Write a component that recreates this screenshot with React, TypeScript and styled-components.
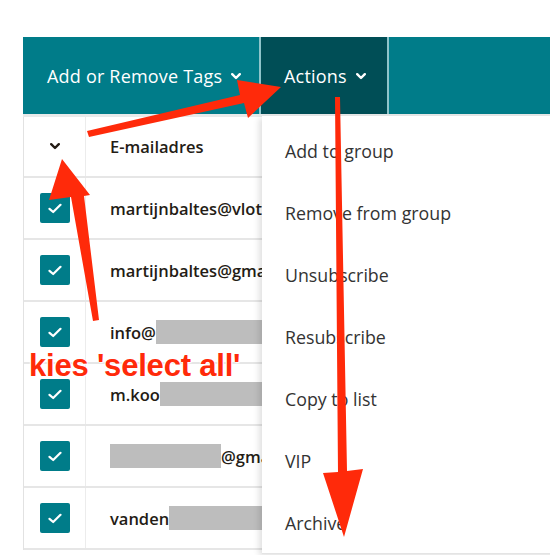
import * as React from 'react'
import styled, { createGlobalStyle } from 'styled-components'

const GlobalStyle = createGlobalStyle`
  html, body {
    margin: 0;
    padding: 0;
    background: #ffffff;
    overflow: hidden;
  }
  body {
    font-family: 'Open Sans', 'Liberation Sans', sans-serif;
  }
`

const Page = styled.div`
  position: relative;
  width: 550px;
  height: 555px;
  overflow: hidden;
  padding: 37px 0 0 23px;
  box-sizing: border-box;
`

const Toolbar = styled.div`
  display: flex;
  height: 77px;
  width: 560px;
  background: #007c89;
  border-bottom: 3px solid #e8eaea;
`

const ToolButton = styled.div<{ $active?: boolean; $width: number }>`
  display: flex;
  align-items: center;
  gap: 9px;
  width: ${p => p.$width}px;
  padding-left: ${p => (p.$active ? 23 : 24)}px;
  box-sizing: border-box;
  background: ${p => (p.$active ? '#004e56' : 'transparent')};
  border-right: 2px solid #8fc4ca;
  color: #ffffff;
  font-size: 18px;
  letter-spacing: 0.2px;
  padding-top: 1px;
`

const Table = styled.div`
  border-left: 1px solid #e2e2e2;
`

const Row = styled.div<{ $header?: boolean }>`
  display: grid;
  grid-template-columns: 62px 1fr;
  height: ${p => (p.$header ? 61 : 62)}px;
  border-bottom: 2px solid #e6e6e6;
  box-sizing: border-box;
`

const CheckCell = styled.div`
  display: flex;
  align-items: center;
  justify-content: center;
  border-right: 1px solid #ececec;
`

const EmailCell = styled.div`
  display: flex;
  align-items: center;
  padding-left: 24px;
  font-size: 16.5px;
  font-weight: 600;
  color: #241c15;
  white-space: nowrap;
`

const Box = styled.div`
  width: 30px;
  height: 30px;
  border-radius: 2px;
  background: #007c89;
  display: flex;
  align-items: center;
  justify-content: center;
`

const Redact = styled.span<{ $w: number }>`
  display: inline-block;
  width: ${p => p.$w}px;
  height: 24px;
  background: #bdbdbd;
`

const Menu = styled.div`
  position: absolute;
  left: 262px;
  top: 116px;
  width: 300px;
  height: 437px;
  background: #ffffff;
  box-shadow: -3px 2px 6px rgba(0, 0, 0, 0.12);
  border-bottom: 1px solid #e4e4e4;
`

const MenuItem = styled.div`
  height: 62px;
  display: flex;
  align-items: center;
  padding-left: 23px;
  font-size: 17.8px;
  color: #333333;
  padding-top: 7px;
  box-sizing: border-box;
`

const Overlay = styled.svg`
  position: absolute;
  left: 0;
  top: 0;
  pointer-events: none;
`

const Note = styled.div`
  position: absolute;
  left: 29px;
  top: 348px;
  font-family: 'Liberation Sans', Arial, sans-serif;
  font-weight: 700;
  font-size: 31px;
  color: #ff2a0a;
  letter-spacing: -0.2px;
  text-shadow: 0 0 2px #fff, 0 0 2px #fff, 1px 1px 1px #fff, -1px -1px 1px #fff;
`

const Chevron = ({ color, size = 10 }: { color: string; size?: number }) => (
  <svg width={size} height={size * 0.7} viewBox="0 0 10 7">
    <path d="M1.2 1.2 L5 5 L8.8 1.2" fill="none" stroke={color} strokeWidth="2.4" strokeLinecap="round" strokeLinejoin="round" />
  </svg>
)

const Check = () => (
  <svg width="14" height="11" viewBox="0 0 14 11">
    <path d="M1.5 5.8 L5.2 9 L12.5 1.8" fill="none" stroke="#fff" strokeWidth="2.2" strokeLinecap="round" strokeLinejoin="round" />
  </svg>
)

const rows: { pre: string; w: number; post?: string }[] = [
  { pre: 'martijnbaltes@vlotweg.nl', w: 0 },
  { pre: 'martijnbaltes@gmail.com', w: 0 },
  { pre: 'info@', w: 140 },
  { pre: 'm.koo', w: 140 },
  { pre: '', w: 111, post: '@gmail.com' },
  { pre: 'vanden', w: 120 },
]

const menuItems = ['Add to group', 'Remove from group', 'Unsubscribe', 'Resubscribe', 'Copy to list', 'VIP', 'Archive']

export default function App() {
  return (
    <Page>
      <GlobalStyle />
      <Toolbar>
        <ToolButton $width={238}>
          Add or Remove Tags <Chevron color="#fff" />
        </ToolButton>
        <ToolButton $width={128} $active>
          Actions <Chevron color="#fff" />
        </ToolButton>
      </Toolbar>
      <Table>
        <Row $header>
          <CheckCell>
            <Chevron color="#241c15" />
          </CheckCell>
          <EmailCell>E-mailadres</EmailCell>
        </Row>
        {rows.map((r, i) => (
          <Row key={i}>
            <CheckCell>
              <Box>
                <Check />
              </Box>
            </CheckCell>
            <EmailCell>
              {r.w > 0 && !r.pre && <Redact $w={r.w} />}
              {r.pre}
              {r.w > 0 && r.pre && <Redact $w={r.w} />}
              {r.post}
            </EmailCell>
          </Row>
        ))}
      </Table>
      <Menu>
        {menuItems.map(m => (
          <MenuItem key={m}>{m}</MenuItem>
        ))}
      </Menu>
      <Overlay width="550" height="555" viewBox="0 0 550 555">
        {/* header arrow to Actions */}
        <polygon points="89,137 244,103 248,118 281,87 237,80 240,95 87,131" fill="#ff2a0a" />
        {/* down arrow to Archive */}
        <polygon points="335,97 340,97 347,471 363,469 344,537 323,473 338,472" fill="#ff2a0a" />
        {/* up arrow to select-all chevron */}
        <polygon points="93,321 99,320 84,196 90,195 62,159 49,200 71,197" fill="#ff2a0a" />
      </Overlay>
      <Note>kies 'select all'</Note>
    </Page>
  )
}
